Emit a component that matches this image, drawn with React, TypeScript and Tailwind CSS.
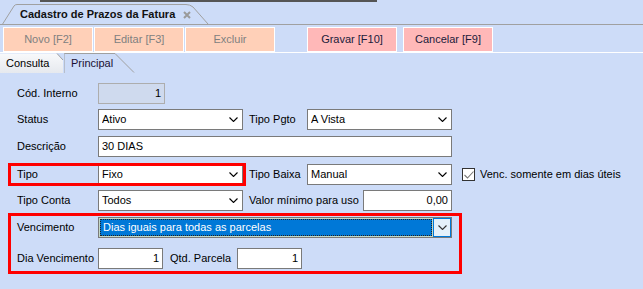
import React from "react";

function Chevron({ color = "#000" }: { color?: string }) {
  return (
    <svg width="9" height="5" viewBox="0 0 9 5" className="shrink-0">
      <path d="M0.5 0.5 L4.5 4.5 L8.5 0.5" stroke={color} strokeWidth="1.1" fill="none" />
    </svg>
  );
}

function Select({ value, className }: { value: string; className: string }) {
  return (
    <div className={`flex items-center h-[21px] border border-[#7a7a7a] bg-white pl-[3px] pr-[4px] ${className}`}>
      <span className="flex-1 truncate">{value}</span>
      <Chevron />
    </div>
  );
}

function Input({ value, className, right }: { value: string; className: string; right?: boolean }) {
  return (
    <div
      className={`flex items-center h-[21px] border border-[#7a7a7a] bg-white px-[3px] ${
        right ? "justify-end" : ""
      } ${className}`}
    >
      {value}
    </div>
  );
}

function ToolButton({ label, disabled, className }: { label: string; disabled?: boolean; className: string }) {
  return (
    <div
      className={`flex items-center justify-center h-[25px] w-[90px] border border-white ${
        disabled ? "bg-[#ffd0b8] text-[#808080]" : "bg-[#ffb8b8] text-[#1b1b3b]"
      } ${className}`}
    >
      {label}
    </div>
  );
}

export default function App() {
  return (
    <div className="relative w-[643px] h-[289px] overflow-hidden bg-[#cddcf8] text-[11px] text-black font-['Liberation_Sans',Arial,sans-serif]">
      {/* document tab strip */}
      <div className="relative h-[25px] border-b border-[#a0a0a0]">
        <div className="ml-[40px] w-[337px] h-[2px] bg-[#555555]" />
        <div className="relative ml-[2px] mt-[2px] w-[207px] h-[21px]">
          <svg className="absolute inset-0" width="207" height="21" viewBox="0 0 207 21">
            <path
              d="M0 21 L12 2 Q13 0.5 15 0.5 L184 0.5 Q188 0.5 191 3 L206 20"
              stroke="#a0a0a0"
              fill="none"
            />
          </svg>
          <div className="relative flex items-center h-full pl-[18px] gap-[8px]">
            <span className="font-bold text-[#111]">Cadastro de Prazos da Fatura</span>
            <svg width="8" height="8" viewBox="0 0 8 8">
              <path d="M1 1 L7 7 M7 1 L1 7" stroke="#9a9a9a" strokeWidth="2" />
            </svg>
          </div>
        </div>
      </div>

      {/* toolbar */}
      <div className="flex pt-[2px] pl-[3px] h-[28px] border-b border-white">
        <ToolButton label="Novo [F2]" disabled className="" />
        <ToolButton label="Editar [F3]" disabled className="ml-[1px]" />
        <ToolButton label="Excluir" disabled className="ml-[1px]" />
        <ToolButton label="Gravar [F10]" className="ml-[32px]" />
        <ToolButton label="Cancelar [F9]" className="ml-[6px]" />
      </div>

      {/* page tabs */}
      <div className="relative flex h-[20px]">
        <div className="relative w-[64px] h-full">
          <svg className="absolute inset-0" width="64" height="20" viewBox="0 0 64 20">
            <defs>
              <linearGradient id="g" x1="0" y1="0" x2="0" y2="1">
                <stop offset="0" stopColor="#f8f9fb" />
                <stop offset="1" stopColor="#e6e9ee" />
              </linearGradient>
            </defs>
            <path d="M0 0.5 L57 0.5 L63 7 L63 20 L0 20 Z" fill="url(#g)" />
            <path d="M57 0.5 L63 7" stroke="#a0a0a0" fill="none" />
          </svg>
          <span className="relative flex items-center h-full pl-[6px]">Consulta</span>
        </div>
        <div className="relative w-[72px] h-full">
          <svg className="absolute inset-0" width="72" height="20" viewBox="0 0 72 20">
            <path d="M0 20 L0 1 Q0 0.5 1 0.5 L51 0.5 L70 19.5" stroke="#a0a0a0" fill="none" />
          </svg>
          <span className="relative flex items-center h-full pl-[7px] text-[#1a1033]">Principal</span>
        </div>
      </div>

      {/* form */}
      <div className="flex flex-col pl-[17px]">
        <div className="flex items-center mt-[10px]">
          <span className="w-[81px]">Cód. Interno</span>
          <div className="flex items-center justify-end h-[21px] w-[67px] border border-[#adadad] bg-[#cfdaee] px-[3px]">
            1
          </div>
        </div>

        <div className="flex items-center mt-[5px]">
          <span className="w-[81px]">Status</span>
          <Select value="Ativo" className="w-[145px]" />
          <span className="ml-[6px] w-[58px]">Tipo Pgto</span>
          <Select value="A Vista" className="w-[145px]" />
        </div>

        <div className="flex items-center mt-[6px]">
          <span className="w-[81px]">Descrição</span>
          <Input value="30 DIAS" className="w-[354px]" />
        </div>

        <div className="flex items-center mt-[7px]">
          <span className="w-[81px]">Tipo</span>
          <Select value="Fixo" className="w-[145px]" />
          <span className="ml-[6px] w-[58px]">Tipo Baixa</span>
          <Select value="Manual" className="w-[145px]" />
          <div className="ml-[10px] flex items-center justify-center w-[13px] h-[13px] border border-[#333333] bg-white">
            <svg width="10" height="8" viewBox="0 0 10 8">
              <path d="M0.5 4 L3.5 7 L9.5 0.5" stroke="#777777" strokeWidth="1.1" fill="none" />
            </svg>
          </div>
          <span className="ml-[5px]">Venc. somente em dias úteis</span>
        </div>

        <div className="flex items-center mt-[5px]">
          <span className="w-[81px]">Tipo Conta</span>
          <Select value="Todos" className="w-[145px]" />
          <span className="ml-[6px] w-[114px]">Valor mínimo para uso</span>
          <Input value="0,00" right className="w-[89px]" />
        </div>

        <div className="flex items-center mt-[6px]">
          <span className="w-[81px]">Vencimento</span>
          <div className="flex items-center h-[21px] w-[354px] border border-[#7a7a7a] bg-[#c4d8c6] pl-[1px] pr-0">
            <div className="flex-1 flex items-center h-[17px] bg-[#0078d7] border border-dotted border-[#222222] pl-[2px] text-white">
              Dias iguais para todas as parcelas
            </div>
            <div className="ml-[1px] flex items-center justify-center w-[18px] h-[19px] bg-[#e5f1fb] border border-[#0078d7]">
              <Chevron color="#333333" />
            </div>
          </div>
        </div>

        <div className="flex items-center mt-[10px]">
          <span className="w-[81px]">Dia Vencimento</span>
          <Input value="1" right className="w-[65px]" />
          <span className="ml-[7px] w-[67px]">Qtd. Parcela</span>
          <Input value="1" right className="w-[65px]" />
        </div>
      </div>

      {/* annotation boxes */}
      <div className="pointer-events-none absolute left-[8px] top-[163px] w-[238px] h-[23px] border-[3px] border-[#ff0000]" />
      <div className="pointer-events-none absolute left-[8px] top-[213px] w-[454px] h-[61px] border-[3px] border-[#ff0000]" />
    </div>
  );
}
